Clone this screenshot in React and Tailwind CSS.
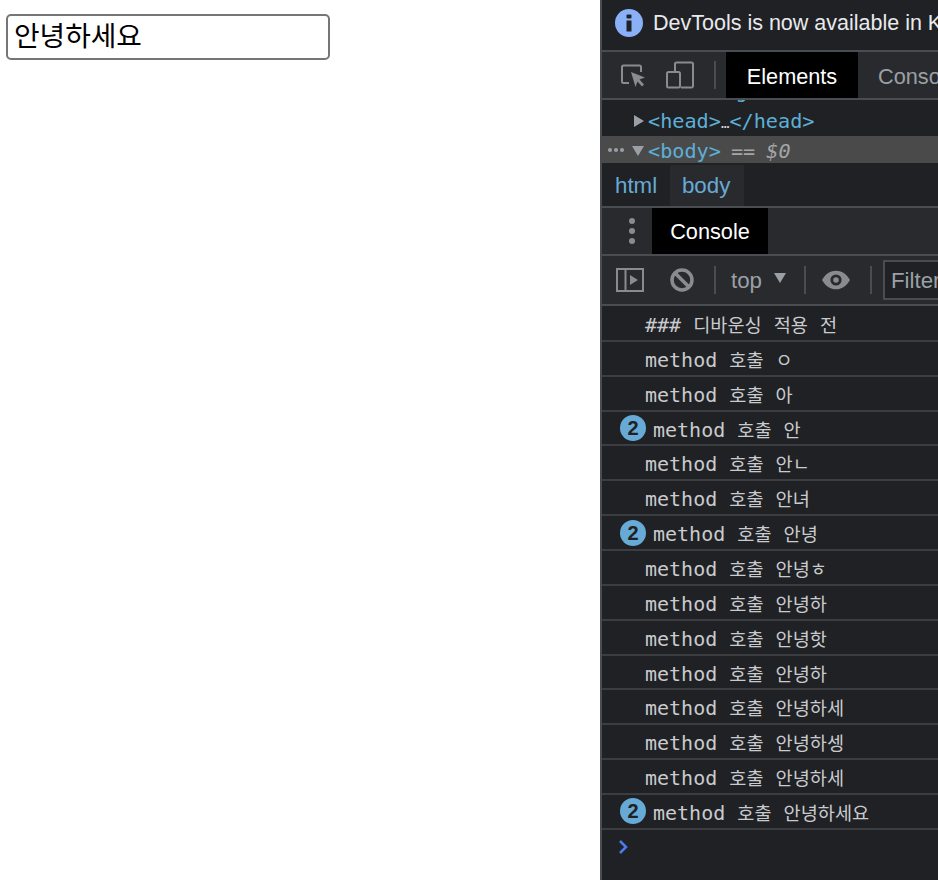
const sans = { fontFamily: '"Liberation Sans", "Noto Sans CJK KR", sans-serif' };
const mono = { fontFamily: '"DejaVu Sans Mono", "Noto Sans CJK KR", monospace' };

const rows = [
  ['### 디바운싱 적용 전', 0],
  ['method 호출 ㅇ', 0],
  ['method 호출 아', 0],
  ['method 호출 안', 2],
  ['method 호출 안ㄴ', 0],
  ['method 호출 안녀', 0],
  ['method 호출 안녕', 2],
  ['method 호출 안녕ㅎ', 0],
  ['method 호출 안녕하', 0],
  ['method 호출 안녕핫', 0],
  ['method 호출 안녕하', 0],
  ['method 호출 안녕하세', 0],
  ['method 호출 안녕하셍', 0],
  ['method 호출 안녕하세', 0],
  ['method 호출 안녕하세요', 2],
];

function Mixed({ text }) {
  return text.split(/([\u3131-\u318E\uAC00-\uD7A3]+)/).map((part, i) =>
    i % 2 ? <span key={i} className="text-[18.6px]">{part}</span> : <span key={i}>{part}</span>
  );
}

function Divider() {
  return <div className="w-[2px] h-[28px] bg-[#494c50] shrink-0" />;
}

function Row({ text, count }) {
  return (
    <div className="h-[34.87px] shrink-0 border-b-2 border-[#3c3d40] flex items-center whitespace-pre pt-[3px] text-[20px] text-[#c9cbce]">
      {count ? (
        <>
          <span style={sans} className="ml-[18px] -mt-[3px] w-[26px] h-[26px] rounded-full bg-[#67aad6] text-[#202124] text-[20px] font-bold flex items-center justify-center shrink-0">{count}</span>
          <span className="ml-[7px]"><Mixed text={text} /></span>
        </>
      ) : (
        <span className="ml-[43px]"><Mixed text={text} /></span>
      )}
    </div>
  );
}

export default function App() {
  return (
    <div className="flex h-[880px] w-[938px] overflow-hidden bg-white">
      <div className="w-[600px] shrink-0 pl-[6px] pt-[14px]">
        <input
          readOnly
          value="안녕하세요"
          style={sans}
          className="block w-[324px] h-[46px] border-2 border-[#767676] rounded-[5px] px-[6px] pb-[6px] text-[27.800px] text-black bg-white outline-none"
        />
      </div>

      <div style={sans} className="w-[338px] shrink-0 h-full border-l-2 border-[#494c50] bg-[#202124] flex flex-col overflow-hidden whitespace-nowrap">
        {/* infobar */}
        <div className="h-[52px] shrink-0 border-b-2 border-[#494c50] flex items-center pl-[13px] pb-[4px]">
          <div className="w-[28px] h-[28px] rounded-full bg-[#8ab0f8] flex items-center justify-center shrink-0">
            <svg width="8" height="18" viewBox="0 0 8 18"><rect x="1.5" y="0.5" width="5" height="4" rx="1" fill="#202124"/><rect x="1.5" y="6.5" width="5" height="11" fill="#202124"/></svg>
          </div>
          <span className="ml-[10px] text-[21.500px] text-[#e8eaed]">DevTools is now available in Korean</span>
        </div>

        {/* main tabs */}
        <div className="h-[48px] shrink-0 border-b-2 border-[#494c50] bg-[#292a2d] flex items-stretch">
          <div className="w-[124px] shrink-0 flex items-center pl-[18px]">
            <svg width="26" height="26" viewBox="0 0 26 26" fill="none" className="shrink-0">
              <path d="M9 21H3.500a1.500 1.500 0 0 1-1.500-1.500V5a1.500 1.500 0 0 1 1.500-1.500h16A1.500 1.500 0 0 1 21 5v5" stroke="#8a8b8d" strokeWidth="2"/>
              <path d="M11 10l14 5.500-5.500 2 4.500 5-2 2-4.500-5-2 5.500z" fill="#8a8b8d"/>
            </svg>
            <svg width="28" height="28" viewBox="0 0 28 28" fill="none" className="ml-[20px] shrink-0">
              <path d="M9 10V3a1.500 1.500 0 0 1 1.500-1.500h15A1.500 1.500 0 0 1 27 3v22a1.500 1.500 0 0 1-1.500 1.500H15" stroke="#8a8b8d" strokeWidth="2"/>
              <rect x="1" y="11" width="13" height="15.500" rx="1.500" stroke="#8a8b8d" strokeWidth="2"/>
            </svg>
            <div className="ml-[20px]"><Divider /></div>
          </div>
          <div className="w-[132px] shrink-0 bg-black text-white text-[21.700px] flex items-center justify-center pt-[5px]">Elements</div>
          <div className="ml-[20px] text-[21.700px] text-[#9aa0a6] flex items-center pt-[5px]">Console</div>
        </div>

        {/* dom tree */}
        <div style={mono} className="h-[63px] shrink-0 flex flex-col text-[20.200px] text-[#5db0d7] overflow-hidden">
          <div className="h-[24px] -mt-[21px] shrink-0 leading-[24px] pl-[24px] whitespace-pre">&lt;html lang=<span className="text-[#f29766]">"ko"</span>&gt;</div>
          <div className="h-[33px] shrink-0 flex items-center pt-[3px] pl-[32px]">
            <svg width="10" height="12" viewBox="0 0 10 12" className="shrink-0"><path d="M0 0l10 6-10 6z" fill="#9aa0a6"/></svg>
            <span className="ml-[4px]">&lt;head&gt;<span className="text-[#d5d7da] text-[14px]">…</span>&lt;/head&gt;</span>
          </div>
          <div className="h-[27px] shrink-0 bg-[#4a4a4a] flex items-center pl-[6px]">
            <div className="flex gap-[2px] w-[24px] shrink-0">
              <span className="w-[4px] h-[4px] rounded-full bg-[#9aa0a6]"/>
              <span className="w-[4px] h-[4px] rounded-full bg-[#9aa0a6]"/>
              <span className="w-[4px] h-[4px] rounded-full bg-[#9aa0a6]"/>
            </div>
            <svg width="12" height="10" viewBox="0 0 12 10" className="mt-[3px] shrink-0"><path d="M0 0h12l-6 10z" fill="#9aa0a6"/></svg>
            <span className="ml-[4px] pt-[3px]">&lt;body&gt;</span>
            <span className="ml-[10px] pt-[3px] text-[#a3a5a8]">==</span>
            <span className="ml-[11px] pt-[3px] text-[#a3a5a8] italic">$0</span>
          </div>
        </div>

        {/* breadcrumb */}
        <div className="h-[45px] shrink-0 border-t-2 border-b-2 border-t-[#202124] border-b-[#494c50] flex items-stretch text-[22.300px] text-[#67aad6] pl-[13px]">
          <span className="flex items-center">html</span>
          <span className="ml-[13px] w-[74px] bg-[#292a2d] flex items-center justify-center pr-[2px]">body</span>
        </div>

        {/* drawer tabs */}
        <div className="h-[48px] shrink-0 border-b-2 border-[#494c50] bg-[#292a2d] flex items-stretch">
          <div className="w-[50px] shrink-0 flex flex-col items-center justify-center gap-[4px] pl-[9px]">
            <span className="w-[6px] h-[6px] rounded-full bg-[#8a8b8d]"/>
            <span className="w-[6px] h-[6px] rounded-full bg-[#8a8b8d]"/>
            <span className="w-[6px] h-[6px] rounded-full bg-[#8a8b8d]"/>
          </div>
          <div className="w-[116px] shrink-0 bg-black text-white text-[21.700px] flex items-center justify-center pt-[3px]">Console</div>
        </div>

        {/* console toolbar */}
        <div className="h-[50px] shrink-0 border-b-2 border-[#494c50] bg-[#292a2d] flex items-center pl-[14px]">
          <svg width="28" height="24" viewBox="0 0 28 24" fill="none" className="shrink-0">
            <rect x="1" y="1" width="26" height="22" stroke="#8a8b8d" strokeWidth="2"/>
            <path d="M9.500 1v22" stroke="#8a8b8d" strokeWidth="2"/>
            <path d="M14 7l8 5-8 5z" fill="#8a8b8d"/>
          </svg>
          <svg width="24" height="24" viewBox="0 0 24 24" fill="none" className="ml-[26px] shrink-0">
            <circle cx="12" cy="12" r="10" stroke="#8a8b8d" strokeWidth="3.500"/>
            <path d="M5 5l14 14" stroke="#8a8b8d" strokeWidth="3.500"/>
          </svg>
          <div className="ml-[20px]"><Divider /></div>
          <span className="ml-[15px] pt-[2px] text-[22.300px] text-[#9aa0a6]">top</span>
          <svg width="12" height="10" viewBox="0 0 12 10" className="ml-[12px] -mt-[5px] shrink-0"><path d="M0 0h12l-6 10z" fill="#9aa0a6"/></svg>
          <div className="ml-[18px]"><Divider /></div>
          <svg width="28" height="20" viewBox="0 0 30 20" className="ml-[16px] shrink-0">
            <path fillRule="evenodd" d="M15 0C8 0 3 4.500 0 10c3 5.500 8 10 15 10s12-4.500 15-10C27 4.500 22 0 15 0zm0 16a6 6 0 1 1 0-12 6 6 0 0 1 0 12zm0-3a3 3 0 1 0 0-6 3 3 0 0 0 0 6z" fill="#8a8b8d"/>
          </svg>
          <div className="ml-[20px]"><Divider /></div>
          <div className="ml-[11px] w-[80px] h-[40px] shrink-0 border-2 border-[#494c50] bg-[#202124] pl-[6px] pt-[2px] flex items-center text-[22.300px] text-[#9aa0a6]">Filter</div>
        </div>

        {/* console rows */}
        <div style={mono} className="flex flex-col pt-[1px]">
          {rows.map(([t, c], i) => <Row key={i} text={t} count={c} />)}
          <div className="pl-[15px] pt-[9px]">
            <svg width="12" height="16" viewBox="0 0 12 16" fill="none"><path d="M3 2l6 6-6 6" stroke="#4a7cf0" strokeWidth="2.500"/></svg>
          </div>
        </div>
      </div>
    </div>
  );
}
